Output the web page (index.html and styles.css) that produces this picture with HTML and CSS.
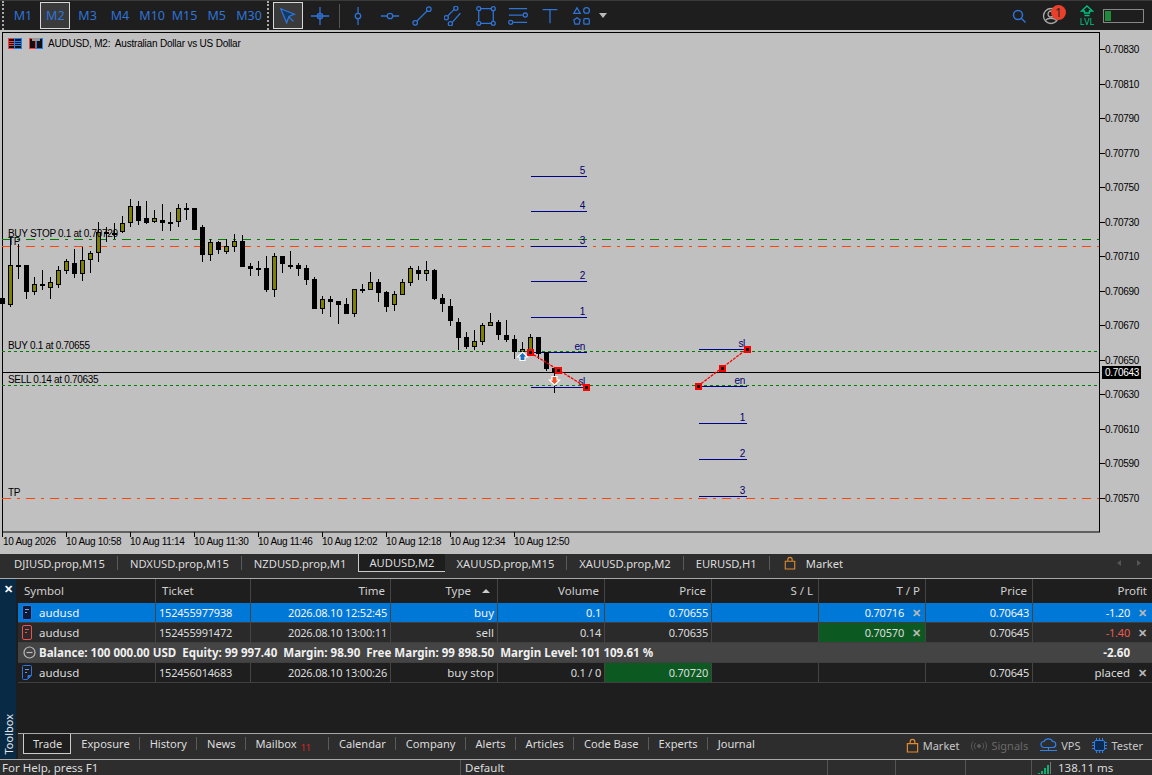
FILE: index.html
```html
<!DOCTYPE html>
<html lang="en">

<head>
    <meta charset="UTF-8">
    <title>AUDUSD, M2 - Terminal</title>
    <link rel="stylesheet" href="styles.css">
</head>

<body>
    <!-- toolbar -->
    <header class="toolbar">
        <span class="grip"></span>
        <div class="timeframes">
            <button class="tf">M1</button>
            <button class="tf active">M2</button>
            <button class="tf">M3</button>
            <button class="tf">M4</button>
            <button class="tf">M10</button>
            <button class="tf">M15</button>
            <button class="tf">M5</button>
            <button class="tf">M30</button>
        </div>
        <span class="grip grip-second"></span>
        <div class="tools">
            <button class="tool active">
                <svg width="20" height="20" viewBox="0 0 22 22"><path d="M3 3l15 6-6 2.5-2.5 7z" fill="#123a66" /><path d="M12 12l5 5" /></svg>
            </button>
            <button class="tool">
                <svg width="20" height="20" viewBox="0 0 22 22"><path d="M11 1v20M1 11h20" /><circle cx="11" cy="11" r="3" /></svg>
            </button>
            <span class="tool-sep"></span>
            <button class="tool">
                <svg width="20" height="20" viewBox="0 0 22 22"><path d="M11 1v7M11 14v7" /><circle cx="11" cy="11" r="3" /></svg>
            </button>
            <button class="tool">
                <svg width="20" height="20" viewBox="0 0 22 22"><path d="M1 11h7M14 11h7" /><circle cx="11" cy="11" r="3" /></svg>
            </button>
            <button class="tool">
                <svg width="20" height="20" viewBox="0 0 22 22"><path d="M5.5 16.5l11-11" /><circle cx="3.5" cy="18.5" r="2.5" /><circle cx="18.5" cy="3.5" r="2.5" /></svg>
            </button>
            <button class="tool">
                <svg width="20" height="20" viewBox="0 0 22 22"><path d="M4 11l7-7M9 18l9-10" /><circle cx="2.5" cy="13" r="2.3" /><circle cx="13" cy="2.5" r="2.3" /><circle cx="7" cy="19.5" r="2.3" /></svg>
            </button>
            <button class="tool">
                <svg width="20" height="20" viewBox="0 0 22 22"><path d="M5 3h12M5 19h12M3 5v12M19 5v12" /><circle cx="3" cy="3" r="2.2" /><circle cx="19" cy="3" r="2.2" /><circle cx="3" cy="19" r="2.2" /><circle cx="19" cy="19" r="2.2" /></svg>
            </button>
            <button class="tool">
                <svg width="20" height="20" viewBox="0 0 22 22"><path d="M1 3h20M1 10h15M6 18h15" /><circle cx="19" cy="10" r="2.3" /><circle cx="3" cy="18" r="2.3" /></svg>
            </button>
            <button class="tool">
                <svg width="20" height="20" viewBox="0 0 22 22"><path d="M3 4h16M11 4v15" /></svg>
            </button>
            <button class="tool">
                <svg width="20" height="20" viewBox="0 0 22 22"><path d="M5.5 2l3.5 6h-7zM5.5 13l3.5 2.5-1.3 4.5h-4.4l-1.3-4.5z" /><circle cx="16" cy="5" r="3.2" /><rect x="13" y="14" width="6" height="6" rx="1" /></svg>
            </button>
            <span class="drop-arrow"></span>
        </div>
        <div class="status-icons">
            <svg class="search-icon" width="16" height="16" viewBox="0 0 16 16"><circle cx="7" cy="7" r="4.5" /><path d="M10.5 10.5l4 4" /></svg>
            <div class="account">
                <svg width="18" height="18" viewBox="0 0 18 18"><circle cx="9" cy="9" r="7.5" /><circle cx="9" cy="7" r="3" /><path d="M3.5 13.5c2-3 9-3 11 0" /></svg>
                <span class="badge">1</span>
            </div>
            <div class="lvl">
                <svg width="14" height="12" viewBox="0 0 14 12"><path d="M7 1l5.5 5h-3v2h-5v-2h-3zM4.5 10.5h5" /></svg>
                <span>LVL</span>
            </div>
            <div class="meter"><span class="meter-fill"></span></div>
        </div>
    </header>

    <!-- chart, a free canvas in page coordinates -->
    <svg class="chart" width="1152" height="524" viewBox="0 30 1152 524">
        <rect x="2.5" y="32.5" width="1097" height="499.5" fill="none" stroke="#000" />

        <g class="ticks">
            <path d="M1100 49.5h5M1100 84.5h5M1100 118.5h5M1100 153.5h5M1100 187.5h5M1100 222.5h5M1100 256.5h5M1100 291.5h5M1100 325.5h5M1100 360.5h5M1100 394.5h5M1100 429.5h5M1100 463.5h5M1100 498.5h5" />
            <path d="M2.5 532v5M66.5 532v5M130.5 532v5M194.5 532v5M258.5 532v5M322.5 532v5M386.5 532v5M450.5 532v5M514.5 532v5" />
        </g>
        <g class="axis-text">
            <text x="1105" y="53">0.70830</text>
            <text x="1105" y="88">0.70810</text>
            <text x="1105" y="122">0.70790</text>
            <text x="1105" y="157">0.70770</text>
            <text x="1105" y="191">0.70750</text>
            <text x="1105" y="226">0.70730</text>
            <text x="1105" y="260">0.70710</text>
            <text x="1105" y="295">0.70690</text>
            <text x="1105" y="329">0.70670</text>
            <text x="1105" y="364">0.70650</text>
            <text x="1105" y="398">0.70630</text>
            <text x="1105" y="433">0.70610</text>
            <text x="1105" y="467">0.70590</text>
            <text x="1105" y="502">0.70570</text>
            <text x="3" y="545">10 Aug 2026</text>
            <text x="66" y="545">10 Aug 10:58</text>
            <text x="130" y="545">10 Aug 11:14</text>
            <text x="194" y="545">10 Aug 11:30</text>
            <text x="258" y="545">10 Aug 11:46</text>
            <text x="322" y="545">10 Aug 12:02</text>
            <text x="386" y="545">10 Aug 12:18</text>
            <text x="450" y="545">10 Aug 12:34</text>
            <text x="514" y="545">10 Aug 12:50</text>
        </g>

        <!-- order lines -->
        <path class="line-dashdot green" d="M2 239.5H1099" />
        <path class="line-dashdot orange" d="M2 246.5H1099" />
        <path class="line-dashdot orange" d="M2 498.5H1099" />
        <path class="line-dash" d="M2 351.5H1099" />
        <path class="line-dash" d="M2 385.5H1099" />
        <path class="line-price" d="M3 372.5H1100" />

        <!-- levels -->
        <path class="level" d="M531 176.5h56M531 211.5h56M531 246.5h56M531 281.5h56M531 317.5h56M531 352.5h56M531 387.5h56" />
        <path class="level" d="M699 349.5h48M699 386.5h48M699 423.5h48M699 459.5h48M699 496.5h48" />

        <g id="candles"></g>

        <g class="level-text">
            <text x="585" y="174">5</text>
            <text x="585" y="209">4</text>
            <text x="585" y="244">3</text>
            <text x="585" y="279">2</text>
            <text x="585" y="315">1</text>
            <text x="585" y="350">en</text>
            <text x="585" y="385">sl</text>
            <text x="745" y="347">sl</text>
            <text x="745" y="384">en</text>
            <text x="745" y="421">1</text>
            <text x="745" y="457">2</text>
            <text x="745" y="494">3</text>
        </g>

        <g class="chart-text">
            <text x="8" y="237">BUY STOP 0.1 at 0.70720</text>
            <text x="8" y="245">TP</text>
            <text x="8" y="349">BUY 0.1 at 0.70655</text>
            <text x="8" y="383">SELL 0.14 at 0.70635</text>
            <text x="8" y="496">TP</text>
            <text class="chart-title" x="48" y="47">AUDUSD, M2:&#160; Australian Dollar vs US Dollar</text>
        </g>

        <!-- small icons next to the title -->
        <g class="title-icons">
            <rect x="8.5" y="38.5" width="6" height="10" fill="#111" stroke="#f04040" />
            <rect x="14.5" y="38.5" width="7" height="10" fill="#111" stroke="#2080f0" />
            <path d="M9 41.5h5M9 43.5h5M9 45.5h5" stroke="#f04040" />
            <path d="M15 41.5h6M15 43.5h6M15 45.5h6" stroke="#2080f0" />
            <rect x="29.5" y="38.5" width="6" height="10" fill="#111" stroke="#f04040" />
            <rect x="36.5" y="38.5" width="6" height="10" fill="#111" stroke="#2080f0" />
            <rect x="32" y="38" width="8" height="3" fill="#999" />
        </g>

        <!-- trend lines -->
        <path class="trend" d="M530 352.5L586 387M698 386L747 349" />
        <g class="handles">
            <rect x="527.5" y="349.5" width="5" height="5" />
            <rect x="555.5" y="367.5" width="5" height="5" />
            <rect x="583.5" y="384.5" width="5" height="5" />
            <rect x="695.5" y="383.5" width="5" height="5" />
            <rect x="719.5" y="365.5" width="5" height="5" />
            <rect x="744.5" y="346.5" width="5" height="5" />
        </g>
        <path class="arrow-buy" d="M522.5 352l5 5h-2.5v3.5h-5v-3.5h-2.5z" />
        <path class="arrow-sell" d="M554.5 385l5-5h-2.5v-3.5h-5v3.5h-2.5z" />

        <rect x="1102" y="366" width="39" height="13" fill="#000" />
        <text class="price-tag" x="1105" y="376">0.70643</text>
    </svg>

    <!-- chart tabs -->
    <nav class="chart-tabs">
        <span class="chart-tab">DJIUSD.prop,M15</span>
        <span class="chart-tab">NDXUSD.prop,M15</span>
        <span class="chart-tab">NZDUSD.prop,M1</span>
        <span class="chart-tab current">AUDUSD,M2</span>
        <span class="chart-tab">XAUUSD.prop,M15</span>
        <span class="chart-tab">XAUUSD.prop,M2</span>
        <span class="chart-tab">EURUSD,H1</span>
        <span class="chart-tab market">
            <svg class="bag" width="12" height="14" viewBox="0 0 14 15"><path d="M1.5 5.5h11v9h-11zM4.5 5.5v-2a2.5 2.5 0 0 1 5 0v2" /></svg>
            Market
        </span>
        <span class="tab-arrows"><i class="arrow-left"></i><i class="arrow-right"></i></span>
    </nav>

    <!-- toolbox -->
    <section class="toolbox">
        <aside class="side">
            <span class="side-close">&#10005;</span>
            <span class="side-title">Toolbox</span>
        </aside>
        <div class="panel">
            <div class="table-wrap">
                <table class="trades">
                    <colgroup>
                        <col class="c-symbol">
                        <col class="c-ticket">
                        <col class="c-time">
                        <col class="c-num">
                        <col class="c-num">
                        <col class="c-num">
                        <col class="c-num">
                        <col class="c-num">
                        <col class="c-num">
                        <col class="c-profit">
                    </colgroup>
                    <thead>
                        <tr>
                            <th class="left">Symbol</th>
                            <th class="left">Ticket</th>
                            <th>Time</th>
                            <th class="th-type">Type <i class="sort"></i></th>
                            <th>Volume</th>
                            <th>Price</th>
                            <th>S / L</th>
                            <th>T / P</th>
                            <th>Price</th>
                            <th>Profit</th>
                        </tr>
                    </thead>
                    <tbody>
                        <tr class="selected">
                            <td class="left symbol">
                                <svg width="10" height="15" viewBox="0 0 10 15"><rect x="0.5" y="0.5" width="9" height="14" rx="1.5" fill="#111a33" stroke="#2f74e0" /><path d="M3 4.5h4M3 7.5h2" stroke="#6fa8f0" /></svg>
                                audusd
                            </td>
                            <td class="left">152455977938</td>
                            <td>2026.08.10 12:52:45</td>
                            <td class="word">buy</td>
                            <td>0.1</td>
                            <td>0.70655</td>
                            <td></td>
                            <td class="with-x">0.70716<i class="x">&#10005;</i></td>
                            <td>0.70643</td>
                            <td class="with-x">-1.20<i class="x">&#10005;</i></td>
                        </tr>
                        <tr class="odd">
                            <td class="left symbol">
                                <svg width="10" height="15" viewBox="0 0 10 15"><rect x="0.5" y="0.5" width="9" height="14" rx="1.5" fill="#2a2a2a" stroke="#f05050" /><path d="M3 4.5h4M3 7.5h2" stroke="#f05050" /></svg>
                                audusd
                            </td>
                            <td class="left">152455991472</td>
                            <td>2026.08.10 13:00:11</td>
                            <td class="word">sell</td>
                            <td>0.14</td>
                            <td>0.70635</td>
                            <td></td>
                            <td class="with-x hit">0.70570<i class="x">&#10005;</i></td>
                            <td>0.70645</td>
                            <td class="with-x loss">-1.40<i class="x">&#10005;</i></td>
                        </tr>
                        <tr class="summary">
                            <td colspan="9" class="left">
                                <svg width="13" height="13" viewBox="0 0 13 13"><circle cx="6.5" cy="6.5" r="5.5" fill="none" stroke="#bbb" stroke-width="1.2" /><path d="M3.5 6.5h6" stroke="#bbb" stroke-width="1.2" /></svg>
                                Balance: 100 000.00 USD&#160; Equity: 99 997.40&#160; Margin: 98.90&#160; Free Margin: 99 898.50&#160; Margin Level: 101 109.61 %
                            </td>
                            <td class="with-x">-2.60<i class="x blank"></i></td>
                        </tr>
                        <tr>
                            <td class="left symbol">
                                <svg width="10" height="15" viewBox="0 0 10 15"><path d="M1.5 0.5h7a1 1 0 0 1 1 1v9l-4 4h-4a1 1 0 0 1-1-1v-12a1 1 0 0 1 1-1z" fill="#1c1c1c" stroke="#2f74e0" /><path d="M3 4.5h4M3 7.5h2" stroke="#5f98f0" /><path d="M6 14v-3.5h3.5" fill="#2f74e0" stroke="#2f74e0" /></svg>
                                audusd
                            </td>
                            <td class="left">152456014683</td>
                            <td>2026.08.10 13:00:26</td>
                            <td class="word">buy stop</td>
                            <td>0.1 / 0</td>
                            <td class="hit">0.70720</td>
                            <td></td>
                            <td></td>
                            <td>0.70645</td>
                            <td class="with-x word">placed<i class="x">&#10005;</i></td>
                        </tr>
                    </tbody>
                </table>
            </div>
            <nav class="box-tabs">
                <span class="box-tab current">Trade</span>
                <span class="box-tab">Exposure</span>
                <span class="box-tab">History</span>
                <span class="box-tab">News</span>
                <span class="box-tab mail">Mailbox<sub>11</sub></span>
                <span class="box-tab">Calendar</span>
                <span class="box-tab">Company</span>
                <span class="box-tab">Alerts</span>
                <span class="box-tab">Articles</span>
                <span class="box-tab">Code Base</span>
                <span class="box-tab">Experts</span>
                <span class="box-tab">Journal</span>
                <div class="services">
                    <span class="service">
                        <svg class="bag" width="13" height="15" viewBox="0 0 14 15"><path d="M1.5 5.5h11v9h-11zM4.5 5.5v-2a2.5 2.5 0 0 1 5 0v2" /></svg>
                        Market
                    </span>
                    <span class="service dim">
                        <svg width="16" height="10" viewBox="0 0 16 10" fill="none" stroke="#5a5a5a"><circle cx="8" cy="5" r="1.5" fill="#5a5a5a" /><path d="M4.5 2c-1.5 2-1.5 4 0 6M11.5 2c1.5 2 1.5 4 0 6M2 0.5c-2 3-2 6 0 9M14 0.5c2 3 2 6 0 9" /></svg>
                        Signals
                    </span>
                    <span class="service">
                        <svg width="17" height="15" viewBox="0 0 17 15" fill="none" stroke="#2f80e8" stroke-width="1.2"><path d="M4 9.5a3 3 0 0 1 0-6c1-3 7-4 8.5 0a3 3 0 0 1 .5 6z" /><path d="M0 12.5h17M8.5 9.5v3" /></svg>
                        VPS
                    </span>
                    <span class="service">
                        <svg width="15" height="15" viewBox="0 0 15 15"><rect x="2.5" y="2.5" width="10" height="10" rx="1.5" fill="#0a2a52" stroke="#2f80e8" /><path d="M4.5 0v2M7.5 0v2M10.5 0v2M4.5 13v2M7.5 13v2M10.5 13v2M0 4.5h2M0 7.5h2M0 10.5h2M13 4.5h2M13 7.5h2M13 10.5h2" stroke="#2f80e8" /></svg>
                        Tester
                    </span>
                </div>
            </nav>
        </div>
    </section>

    <!-- status bar -->
    <footer class="statusbar">
        <span class="st st-help">For Help, press F1</span>
        <span class="st st-profile">Default</span>
        <span class="st st-a"></span>
        <span class="st st-b"></span>
        <span class="st st-c"></span>
        <span class="st st-ping">
            <svg width="14" height="12" viewBox="0 0 14 12"><path d="M1 11h2v1h-2zM4 9h2v3h-2zM7 6h2v6h-2zM10 3h2v9h-2z" fill="#10b070" /><path d="M13 0h1v12h-1z" fill="#777" /></svg>
            138.11 ms
        </span>
    </footer>

    <script src="chart.js"></script>
</body>

</html>
```

FILE: styles.css
```css
* {
    box-sizing: border-box;
}

html,
body {
    margin: 0;
    height: 775px;
    overflow: hidden;
}

body {
    display: flex;
    flex-direction: column;
    width: 1152px;
    background: #2d2d2d;
    color: #dcdcdc;
    font-family: "Noto Sans", "Liberation Sans", sans-serif;
    font-size: 11px;
}

button {
    font: inherit;
    padding: 0;
    background: none;
    border: 1px solid transparent;
}

/* toolbar */
.toolbar {
    position: relative;
    display: flex;
    align-items: center;
    height: 30px;
    flex: none;
    background: #1e1e1e;
    border-top: 1px solid #3a3a3a;
}

.grip {
    width: 2px;
    height: 29px;
    margin-left: 2px;
    border-left: 2px dotted #aaa;
}

.grip-second {
    margin-left: 3px;
}

.timeframes {
    display: flex;
    gap: 2.3px;
    margin-left: 4px;
}

.tf {
    width: 30px;
    height: 27px;
    color: #2f74d8;
    font-size: 12.5px;
}

.tf.active,
.tool.active {
    background: #3a3a3a;
    border-color: #d8d8d8;
}

.tools {
    display: flex;
    align-items: center;
    margin-left: 3px;
}

.tool {
    display: flex;
    align-items: center;
    justify-content: center;
    width: 30px;
    height: 27px;
    margin: 0 1px;
}

.tool svg {
    fill: none;
    stroke: #2f74d8;
    stroke-width: 1.4;
}

.tool-sep {
    width: 1px;
    height: 24px;
    margin: 0 2px 0 3px;
    background: #555;
}

.drop-arrow {
    width: 0;
    height: 0;
    margin-left: 1px;
    border-left: 4px solid transparent;
    border-right: 4px solid transparent;
    border-top: 5px solid #bbb;
}

.status-icons {
    display: flex;
    align-items: center;
    margin-left: auto;
    padding-right: 8px;
}

.search-icon {
    fill: none;
    stroke: #2f74d8;
    stroke-width: 1.5;
}

.account {
    position: relative;
    width: 18px;
    height: 18px;
    margin-left: 15px;
}

.account svg {
    fill: none;
    stroke: #aaa;
    stroke-width: 1.3;
}

.badge {
    position: absolute;
    top: -2px;
    left: 9px;
    width: 15px;
    height: 15px;
    border-radius: 50%;
    background: #e8402a;
    color: #222;
    text-align: center;
    font-size: 12px;
    line-height: 15px;
}

.lvl {
    display: flex;
    flex-direction: column;
    align-items: center;
    width: 16px;
    margin-left: 19px;
    color: #00c080;
    font-size: 9px;
    line-height: 9px;
}

.lvl svg {
    fill: none;
    stroke: #00c080;
    stroke-width: 1.4;
}

.meter {
    width: 41px;
    height: 14px;
    margin-left: 8px;
    border: 1px solid #888;
    padding: 1px;
}

.meter-fill {
    display: block;
    width: 6px;
    height: 100%;
    background: #1f8a3a;
}

/* chart */
.chart {
    display: block;
    flex: none;
    background: #c0c0c0;
}

.ticks path {
    stroke: #000;
    fill: none;
    shape-rendering: crispEdges;
}

.axis-text text,
.chart-text text,
.level-text text,
.price-tag {
    font-family: "Liberation Sans", sans-serif;
    font-size: 10px;
    letter-spacing: -0.3px;
    fill: #000;
}

.chart-text .chart-title {
    letter-spacing: -0.2px;
}

.level-text text {
    fill: #00006e;
    text-anchor: end;
}

.chart .price-tag {
    fill: #fff;
}

.line-dashdot,
.line-dash,
.line-price,
.level {
    fill: none;
    stroke-width: 1;
    shape-rendering: crispEdges;
}

.line-dashdot {
    stroke-dasharray: 9 6 3 6;
}

.green {
    stroke: #008000;
}

.orange {
    stroke: #ff4500;
}

.line-dash {
    stroke: #008000;
    stroke-dasharray: 3 3;
}

.line-price {
    stroke: #000;
}

.level {
    stroke: #00008b;
}

.trend {
    fill: none;
    stroke: #f00;
    stroke-width: 1.3;
    stroke-dasharray: 3 1;
}

.handles rect {
    fill: #000;
    stroke: #f00;
    stroke-width: 2;
    shape-rendering: crispEdges;
}

.arrow-buy {
    fill: #1c6fb8;
    stroke: #fff;
    stroke-width: 1.2;
}

.arrow-sell {
    fill: #f0502a;
    stroke: #fff;
    stroke-width: 1.2;
}

/* chart tabs */
.chart-tabs {
    display: flex;
    align-items: center;
    flex: none;
    height: 25px;
    background: #2d2d2d;
    border-bottom: 1px solid #a8a8a8;
    padding: 0 0 6px 2px;
    font-size: 11.2px;
}

.chart-tab {
    display: flex;
    align-items: center;
    gap: 10px;
    height: 14px;
    padding: 0 12px;
    border-right: 1px solid #5a5a5a;
    white-space: nowrap;
}

.chart-tab.current {
    height: 18px;
    margin-left: -1px;
    background: #1e1e1e;
    border-left: 1px solid #ccc;
    border-bottom: 1px solid #ccc;
    border-right: 0;
    padding: 0 10px;
}

.chart-tab.market {
    margin-left: 2px;
    border-right: 0;
}

.bag {
    fill: none;
    stroke: #e08a30;
    stroke-width: 1.3;
}

.tab-arrows {
    display: flex;
    gap: 16px;
    margin: 0 11px 0 auto;
}

.arrow-left,
.arrow-right {
    width: 0;
    height: 0;
    border-top: 3px solid transparent;
    border-bottom: 3px solid transparent;
}

.arrow-left {
    border-right: 4px solid #555;
}

.arrow-right {
    border-left: 4px solid #555;
}

/* toolbox */
.toolbox {
    display: flex;
    flex: none;
    height: 180px;
    background: #1e1e1e;
}

.side {
    display: flex;
    flex-direction: column;
    align-items: center;
    justify-content: space-between;
    width: 16px;
    margin-right: 2px;
    flex: none;
    background: #082a44;
    color: #e8e8e8;
}

.side-close {
    margin-top: 2px;
    font-size: 11px;
    font-weight: bold;
    color: #fff;
}

.side-title {
    writing-mode: vertical-rl;
    transform: rotate(180deg);
    padding-top: 4px;
}

.panel {
    display: flex;
    flex-direction: column;
    flex: 1;
    min-width: 0;
}

.table-wrap {
    flex: 1;
}

.trades {
    width: 1134px;
    table-layout: fixed;
    border-collapse: separate;
    border-spacing: 0;
}

.c-symbol {
    width: 138px;
}

.c-ticket {
    width: 95px;
}

.c-time {
    width: 140px;
}

.c-num {
    width: 107px;
}

.c-profit {
    width: 119px;
}

.trades th {
    height: 24px;
    padding: 0 5px 2px;
    font-size: 11.5px;
    font-weight: normal;
    color: #d0d0d0;
    text-align: right;
    border-right: 1px solid #444;
}

.trades th:last-child,
.trades td:last-child {
    border-right: 0;
}

.trades th.left {
    text-align: left;
    padding-left: 6px;
}

.trades th.th-type {
    padding-right: 7px;
}

.sort {
    display: inline-block;
    width: 0;
    height: 0;
    margin-left: 8px;
    vertical-align: 2px;
    border-left: 4px solid transparent;
    border-right: 4px solid transparent;
    border-bottom: 4px solid #ccc;
}

.trades td {
    height: 20px;
    padding: 0 3px;
    letter-spacing: -0.2px;
    text-align: right;
    white-space: nowrap;
    border-right: 1px solid #444;
    border-bottom: 1px solid #3f3f3f;
}

.trades td.left {
    text-align: left;
}

.trades td.symbol {
    padding-left: 4px;
}

.trades td.symbol,
.trades td.word {
    font-size: 11.5px;
    letter-spacing: 0;
}

.symbol svg {
    vertical-align: -3px;
    margin-right: 4px;
}

.selected td {
    background: #0078d7;
    color: #f4f4f4;
}

.odd td {
    background: #2a2a2a;
}

.trades .summary td {
    padding-left: 5px;
    background: #444;
    color: #f0f0f0;
    font-size: 11.55px;
    font-weight: bold;
    letter-spacing: 0;
    border-right: 0;
}

.summary svg {
    vertical-align: -2px;
}

.trades td.hit {
    background: #0c5a22;
}

.loss {
    color: #e85a50;
}

.trades td.with-x {
    padding-right: 0;
}

.trades tr td.with-x:last-child {
    padding-right: 1px;
}

.x {
    display: inline-block;
    width: 18px;
    margin-left: 3px;
    font-style: normal;
    font-size: 11px;
    font-weight: bold;
    color: #b8b8b8;
    text-align: center;
}

/* bottom tabs */
.box-tabs {
    display: flex;
    align-items: center;
    flex: none;
    height: 26px;
    background: #2d2d2d;
    border-top: 1px solid #a8a8a8;
    padding-left: 5px;
    font-size: 11.1px;
}

.box-tab {
    display: flex;
    align-items: center;
    height: 13px;
    margin-top: -6px;
    padding: 0 9px 0 10px;
    border-right: 1px solid #5a5a5a;
    white-space: nowrap;
}

.box-tab.current {
    height: 20px;
    padding: 0 8px 0 9px;
    background: #1e1e1e;
    border-left: 1px solid #ccc;
    border-right: 1px solid #ccc;
    border-bottom: 1px solid #ccc;
}

.box-tab.mail {
    padding-right: 17px;
}

.box-tab sub {
    margin: 7px 0 0 4px;
    font-size: 9px;
    line-height: 9px;
    color: #e02020;
}

.box-tab:nth-last-child(2) {
    border-right: 0;
}

.services {
    display: flex;
    align-items: center;
    gap: 12px;
    margin: -2px 9px 0 auto;
    font-size: 11px;
    color: #c8c8c8;
}

.service {
    display: flex;
    align-items: center;
    gap: 4px;
}

.service.dim {
    color: #6a6a6a;
}

/* status bar */
.statusbar {
    display: flex;
    flex: none;
    height: 16px;
    background: #2d2d2d;
    border-top: 1px solid #a8a8a8;
    line-height: 16px;
    font-size: 11.5px;
    overflow: hidden;
}

.st {
    padding-left: 4px;
    border-right: 1px solid #555;
    white-space: nowrap;
}

.st-help {
    width: 461px;
    padding-left: 2px;
}

.st-profile {
    width: 367px;
}

.st-a {
    width: 68px;
}

.st-b {
    width: 70px;
}

.st-c {
    width: 66px;
}

.st-ping {
    display: flex;
    align-items: center;
    gap: 7px;
    padding-left: 5px;
    border-right: 0;
}
```

FILE: chart.js
```js
// x of the first bar and the step between bars
var startX = 2.5;
var step = 8;

// one entry per bar: high, body top, body bottom, low, 1 = olive / 0 = black
var bars = [
    [298, 298, 304, 304, 0], [237, 265, 305, 307, 1], [244, 265, 267, 279, 0], [265, 265, 292, 299, 0],
    [277, 284, 292, 295, 1], [270, 284, 286, 290, 0], [277, 282, 288, 299, 1], [266, 270, 285, 288, 1],
    [259, 261, 271, 274, 1], [249, 263, 274, 278, 0], [247, 260, 274, 281, 1], [251, 253, 260, 273, 1],
    [222, 232, 253, 262, 1], [227, 232, 233, 242, 0], [223, 233, 234, 239, 0], [216, 223, 232, 233, 1],
    [199, 206, 223, 227, 1], [201, 206, 221, 225, 0], [201, 218, 223, 224, 0], [210, 218, 222, 223, 1],
    [204, 220, 223, 231, 0], [212, 222, 223, 231, 0], [204, 208, 222, 227, 1], [203, 208, 209, 220, 0],
    [208, 208, 230, 230, 0], [225, 227, 255, 262, 0], [239, 242, 255, 261, 1], [241, 242, 250, 254, 0],
    [239, 246, 252, 254, 1], [234, 241, 247, 252, 1], [235, 241, 267, 267, 0], [263, 266, 269, 276, 0],
    [261, 268, 269, 276, 0], [256, 268, 290, 292, 0], [253, 256, 290, 297, 1], [256, 256, 264, 273, 0],
    [251, 265, 266, 269, 0], [263, 265, 269, 276, 0], [265, 268, 280, 285, 0], [277, 279, 309, 309, 0],
    [296, 299, 309, 314, 1], [296, 299, 302, 317, 0], [301, 301, 305, 324, 0], [298, 304, 314, 314, 0],
    [289, 289, 314, 317, 1], [284, 289, 290, 293, 0], [272, 282, 290, 290, 1], [279, 282, 293, 302, 0],
    [291, 292, 307, 312, 0], [291, 294, 305, 311, 1], [279, 282, 295, 295, 1], [266, 268, 283, 286, 1],
    [266, 270, 274, 280, 0], [261, 270, 274, 281, 1], [269, 270, 299, 300, 0], [294, 298, 304, 312, 0],
    [299, 306, 321, 326, 0], [318, 322, 338, 350, 0], [332, 337, 347, 349, 0], [330, 341, 347, 350, 1],
    [323, 325, 342, 345, 1], [313, 322, 326, 326, 1], [320, 322, 335, 340, 0], [320, 335, 340, 342, 0],
    [335, 339, 352, 359, 0], [342, 349, 352, 352, 1], [334, 337, 350, 352, 1], [337, 337, 354, 359, 0],
    [352, 352, 369, 371, 0], [368, 368, 372, 393, 0]
];

var svgNS = 'http://www.w3.org/2000/svg';
var group = document.getElementById('candles');

function add(name, attrs) {
    var el = document.createElementNS(svgNS, name);
    for (var key in attrs) {
        el.setAttribute(key, attrs[key]);
    }
    group.appendChild(el);
}

for (var i = 0; i < bars.length; i++) {
    var b = bars[i];
    var x = startX + i * step;

    add('rect', { x: x - 0.5, y: b[0], width: 1, height: b[3] - b[0], fill: '#000', 'shape-rendering': 'crispEdges' });
    add('rect', {
        x: x - 2,
        y: b[1] + 0.5,
        width: 4,
        height: Math.max(b[2] - b[1] - 1, 1),
        fill: b[4] ? '#808000' : '#000',
        stroke: '#000',
        'shape-rendering': 'crispEdges'
    });
}
```
